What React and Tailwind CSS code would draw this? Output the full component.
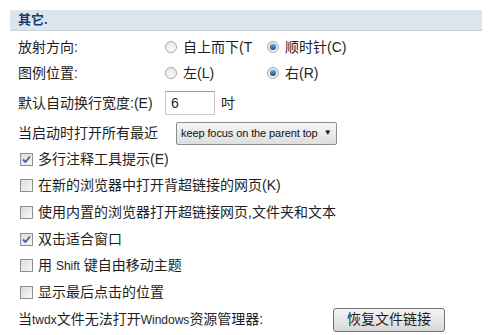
import React from "react";

const Radio = ({ checked }) => (
  <span className="relative inline-block w-[12px] h-[12px] rounded-full border border-[#a6a6a6] bg-gradient-to-b from-[#e8e8e8] to-[#fbfbfb] shrink-0">
    {checked && (
      <span className="absolute left-[2px] top-[2px] w-[6px] h-[6px] rounded-full bg-gradient-to-b from-[#5ab0e6] to-[#1b4f8a] shadow-[0_0_1px_#1b4f8a]" />
    )}
  </span>
);

const Checkbox = ({ checked }) => (
  <span className="relative inline-flex items-center justify-center w-[13px] h-[13px] border border-[#8e8f8f] bg-gradient-to-br from-[#dcdcdc] to-[#f8f8f8] shrink-0">
    {checked && (
      <svg width="9" height="9" viewBox="0 0 9 9">
        <path d="M1 4.5 L3.5 7 L8 1.5" fill="none" stroke="#3c5fae" strokeWidth="1.8" />
      </svg>
    )}
  </span>
);

const CheckRow = ({ checked, children }) => (
  <div className="h-[26.6px] flex items-center gap-[5px] pl-[20px]">
    <Checkbox checked={checked} />
    <span>{children}</span>
  </div>
);

export default function App() {
  return (
    <div
      className="w-[500px] h-[335px] bg-white text-[14px] text-[#1e1e1e] overflow-hidden"
      style={{ fontFamily: '"Liberation Sans", "Noto Sans CJK SC", sans-serif' }}
    >
      <div className="mt-[10px] ml-[10px] w-[472px] h-[21px] bg-[#dbe5ed] border-b border-[#c9d3da] flex items-center pl-[8px] font-bold text-[#1c3b6e] text-[13px]">
        其它.
      </div>

      <div className="mt-[3px] h-[26px] flex items-center pl-[18px]">
        <span className="w-[147px]">放射方向:</span>
        <span className="w-[102px] flex items-center gap-[6px]">
          <Radio />
          <span>自上而下(T</span>
        </span>
        <span className="flex items-center gap-[6px]">
          <Radio checked />
          <span>顺时针(C)</span>
        </span>
      </div>

      <div className="h-[26px] flex items-center pl-[18px]">
        <span className="w-[147px]">图例位置:</span>
        <span className="w-[102px] flex items-center gap-[6px]">
          <Radio />
          <span>左(L)</span>
        </span>
        <span className="flex items-center gap-[6px]">
          <Radio checked />
          <span>右(R)</span>
        </span>
      </div>

      <div className="mt-[4px] h-[26px] flex items-center pl-[18px]">
        <span className="w-[147px]">默认自动换行宽度:(E)</span>
        <span className="w-[50px] h-[24px] border border-[#c7c7c7] border-t-[#9a9a9a] flex items-center pl-[5px]">
          6
        </span>
        <span className="ml-[6px]">吋</span>
      </div>

      <div className="mt-[5px] h-[24px] flex items-center pl-[18px]">
        <span className="w-[158px]">当启动时打开所有最近</span>
        <span className="w-[161px] h-[23px] border border-[#8c8c8c] rounded-[2px] bg-gradient-to-b from-[#f6f6f6] to-[#dedede] flex items-center gap-[6px] pl-[4px] pr-[5px] text-[11px] tracking-[-0.1px] text-[#111] whitespace-nowrap">
          <span>keep focus on the parent top</span>
          <span className="text-[8px] shrink-0 ml-auto">▼</span>
        </span>
      </div>

      <div className="mt-[1px]">
        <CheckRow checked>多行注释工具提示(E)</CheckRow>
        <CheckRow>在新的浏览器中打开背超链接的网页(K)</CheckRow>
        <CheckRow>使用内置的浏览器打开超链接网页,文件夹和文本</CheckRow>
        <CheckRow checked>双击适合窗口</CheckRow>
        <CheckRow>
          用 <span className="text-[12px]">Shift</span> 键自由移动主题
        </CheckRow>
        <CheckRow>显示最后点击的位置</CheckRow>
      </div>

      <div className="mt-[1px] h-[26px] flex items-center pl-[18px]">
        <span className="w-[315px]">
          当<span className="text-[12px]">twdx</span>文件无法打开<span className="text-[12px]">Windows</span>资源管理器:
        </span>
        <button className="w-[112px] h-[24px] border border-[#707070] rounded-[3px] bg-gradient-to-b from-[#f4f4f4] to-[#d8d8d8] text-[14px] text-[#1e1e1e]">
          恢复文件链接
        </button>
      </div>
    </div>
  );
}
